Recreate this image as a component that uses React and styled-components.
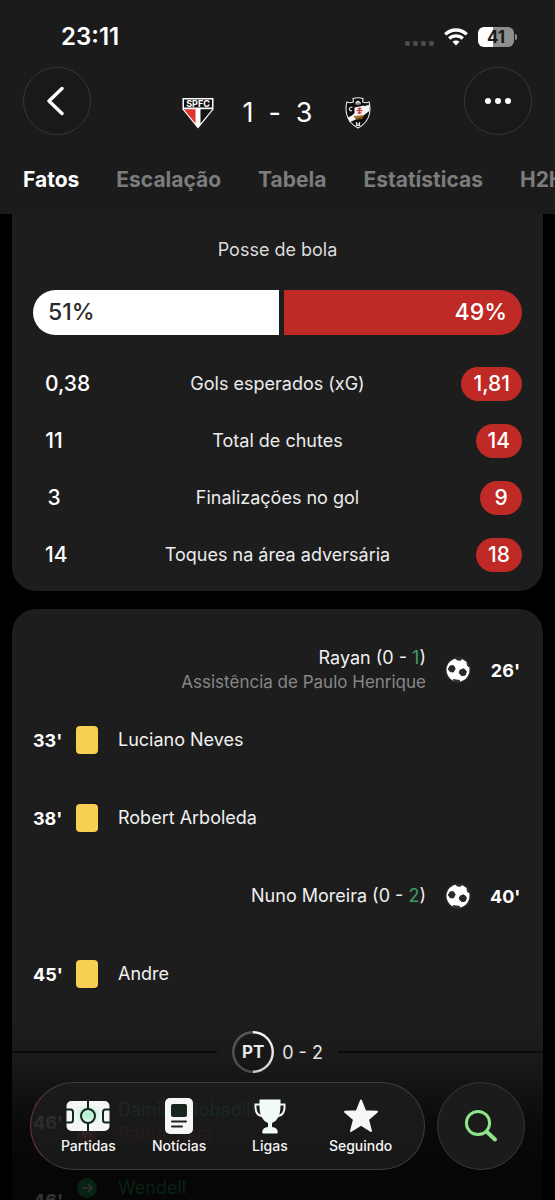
import React from 'react'
import styled, { createGlobalStyle } from 'styled-components'

const GlobalStyle = createGlobalStyle`
  * {
    box-sizing: border-box;
  }
  body {
    margin: 0;
    background: #000;
    color: #fff;
    font-family: Inter, "Liberation Sans", sans-serif;
  }
  button, a {
    font: inherit;
    color: inherit;
  }
`

const Screen = styled.div`
  position: relative;
  display: flex;
  flex-direction: column;
  height: 100vh;
  overflow: hidden;
`

const Header = styled.header`
  flex: none;
  background: #1b1b1b;
`

const StatusBar = styled.div`
  display: flex;
  align-items: center;
  justify-content: space-between;
  padding: 24px 38px 17px 61px;
  font-size: 24px;
  line-height: 26px;
  font-weight: 600;
`

const StatusIcons = styled.div`
  display: flex;
  align-items: center;
  gap: 10px;
`

const SignalDots = styled.div`
  display: flex;
  gap: 3px;
  padding-top: 12px;
  & > i {
    width: 5px;
    height: 5px;
    border-radius: 2px;
    background: #4c4c4c;
  }
`

const Battery = styled.div`
  display: flex;
  align-items: center;
  gap: 1px;
  & > span {
    width: 36px;
    border-radius: 6px;
    background: linear-gradient(90deg, #fff 41%, #8f8f8f 41%);
    color: #1b1b1b;
    font-size: 17px;
    line-height: 20px;
    font-weight: 700;
    text-align: center;
  }
  &::after {
    content: "";
    width: 2px;
    height: 6px;
    border-radius: 0 2px 2px 0;
    background: #8f8f8f;
  }
`

const NavBar = styled.div`
  display: flex;
  align-items: center;
  justify-content: space-between;
  padding: 0 23px;
`

const RoundButton = styled.button`
  display: grid;
  place-items: center;
  width: 68px;
  height: 68px;
  padding: 0;
  border: 1px solid #373737;
  border-radius: 50%;
  background: #191919;
`

const Score = styled.div`
  display: flex;
  align-items: center;
  gap: 29px;
  padding-top: 24px;
`

const ScoreText = styled.div`
  display: flex;
  justify-content: space-between;
  width: 70px;
  font-size: 27px;
  line-height: 32px;
`

const Tabs = styled.nav`
  display: flex;
  gap: 37px;
  padding: 30px 0 19px 23px;
  overflow: hidden;
`

const Tab = styled.a`
  flex: none;
  color: ${p => (p.$active ? '#fff' : '#7c7c7c')};
  font-size: 21px;
  line-height: 30px;
  font-weight: 700;
  text-decoration: none;
`

const Feed = styled.main`
  flex: 1;
  min-height: 0;
  overflow: hidden;
  padding: 0 12px;
`

const Card = styled.section`
  background: #1d1d1d;
  border-radius: ${p => (p.$open ? '0 0 24px 24px' : '24px')};
  & + & {
    margin-top: 18px;
  }
`

const Stats = styled(Card)`
  padding: 21px 21px 8px;
`

const StatsTitle = styled.h2`
  margin: 0 0 25px;
  color: #dcdcdc;
  font-size: 18px;
  line-height: 30px;
  font-weight: 400;
  text-align: center;
`

const Possession = styled.div`
  display: flex;
  gap: 5px;
  margin-bottom: 20px;
  border-radius: 23px;
  overflow: hidden;
  font-size: 23px;
  line-height: 45px;
  font-weight: 500;
`

const Share = styled.div`
  padding: 0 15px;
  background: ${p => (p.$away ? '#c02a26' : '#fff')};
  color: ${p => (p.$away ? '#fff' : '#2b2b2b')};
  text-align: ${p => (p.$away ? 'right' : 'left')};
`

const StatTable = styled.table`
  width: 100%;
  border-collapse: collapse;
  table-layout: fixed;
`

const StatRow = styled.tr`
  height: 57px;
  font-size: 21px;
  font-weight: 500;
  & > td {
    width: 90px;
    padding: 0;
  }
  & > td:last-child {
    text-align: right;
  }
  & > th {
    padding: 0;
    color: #ececec;
    font-size: 18px;
    font-weight: 400;
  }
`

const Value = styled.span`
  display: inline-block;
  min-width: 42px;
  padding: 0 12px;
  border-radius: 17px;
  background: ${p => (p.$best ? '#c02a26' : 'transparent')};
  line-height: 34px;
  text-align: center;
`

const Timeline = styled(Card)`
  padding-top: 30px;
`

const Event = styled.div`
  display: grid;
  grid-template-columns: ${p => (p.$away ? '1fr 26px 30px' : '43px 22px 1fr')};
  column-gap: ${p => (p.$away ? '19px' : '0')};
  align-items: center;
  height: ${p => (p.$tall ? '62px' : '78px')};
  margin-bottom: ${p => (p.$spaced ? '16px' : '0')};
  padding: 0 23px 0 21px;
  text-align: ${p => (p.$away ? 'right' : 'left')};
`

const Minute = styled.time`
  font-size: 18px;
  font-weight: 700;
  white-space: nowrap;
`

const Names = styled.div`
  padding-left: ${p => (p.$indent ? '20px' : '0')};
  color: #f0f0f0;
  font-size: 18px;
  line-height: 24px;
`

const Assist = styled.div`
  color: #878787;
  font-size: 17px;
`

const Colored = styled.span`
  color: ${p => p.$color};
`

const YellowCard = styled.span`
  width: 22px;
  height: 28px;
  border-radius: 4px;
  background: #f7cf52;
`

const SubIcons = styled.span`
  display: grid;
  justify-items: center;
  gap: 4px;
`

const Period = styled.div`
  display: flex;
  align-items: center;
  height: 78px;
  font-size: 18px;
  &::before, &::after {
    content: "";
    flex: 1;
    height: 2px;
    background: #0c0c0c;
  }
  &::before {
    margin-right: 15px;
  }
  &::after {
    margin-left: 15px;
  }
`

const PeriodBadge = styled.span`
  display: grid;
  place-items: center;
  width: 42px;
  height: 42px;
  margin-right: 8px;
  border-radius: 50%;
  background:
    radial-gradient(circle, #1a1a1a 18px, transparent 19px),
    conic-gradient(#fff 50%, #5c5c5c 50%);
  font-size: 17px;
  font-weight: 700;
`

const Bottom = styled.div`
  position: absolute;
  left: 0;
  right: 0;
  bottom: 0;
  display: flex;
  gap: 12px;
  padding: 62px 30px 30px;
  background: linear-gradient(
    rgba(0, 0, 0, 0) 0,
    rgba(0, 0, 0, 0.12) 40px,
    rgba(0, 0, 0, 0.62) 100px,
    rgba(0, 0, 0, 0.8) 150px
  );
`

const Dock = styled.nav`
  flex: 1;
  display: grid;
  grid-template-columns: repeat(4, 1fr);
  height: 88px;
  padding: 15px 18px 0 12px;
  border: 1px solid #3c3c3c;
  border-left-color: #6b3836;
  border-radius: 44px;
  background: rgba(30, 30, 30, 0.78);
`

const DockItem = styled.a`
  display: grid;
  grid-template-rows: 36px 24px;
  justify-items: center;
  align-items: center;
  color: #f6f6f6;
  font-size: 14px;
  line-height: 24px;
  font-weight: 500;
  text-decoration: none;
`

const SearchButton = styled(RoundButton)`
  width: 88px;
  height: 88px;
  background: #1b1b1b;
`

function Wifi() {
  return (
    <svg width="24" height="18" viewBox="0 0 24 18" fill="none" stroke="#fff" strokeWidth="3.4">
      <path d="M1.3 6.4C7.2 0.6 16.8 0.6 22.7 6.4" />
      <path d="M5.2 10.6C9 7 15 7 18.8 10.6" />
      <path d="M12 17.6L8.4 13.8C10.4 11.9 13.6 11.9 15.6 13.8Z" fill="#fff" stroke="none" />
    </svg>
  )
}

function HomeCrest() {
  return (
    <svg width="32" height="32" viewBox="0 0 32 32" role="img" aria-label="SPFC">
      <path d="M0.5 1H31.5V12.5L16 31.5L0.5 12.5Z" fill="#fff" />
      <path d="M2 2.5H30V10.500H2Z" fill="#111" />
      <path d="M2 12.200H13.500V26.500L2 12.5Z" fill="#e0342f" />
      <path d="M30 12.200H18.500V26.500L30 12.5Z" fill="#111" />
      <text x="16" y="9.600" fill="#fff" fontSize="9" fontWeight="700" textAnchor="middle" fontFamily="Inter, sans-serif">SPFC</text>
    </svg>
  )
}

function AwayCrest() {
  return (
    <svg width="32" height="32" viewBox="0 0 32 32" role="img" aria-label="Vasco">
      <path d="M11 1.6Q16 0 21 1.6L20.6 5Q24 6.4 27.2 5Q28.600 11 27.400 17Q25.500 26 16 31Q6.500 26 4.600 17Q3.400 11 4.800 5Q8 6.400 11.400 5Z" fill="#0c0c0c" stroke="#ececec" strokeWidth="1.1" />
      <path d="M27.600 7.500L27.300 14Q20 20 15 22L7.500 25.200L5.800 20.500Q9 19.500 13 16L21 9.500Z" fill="#f4f4f4" />
      <path d="M12.500 10.500L22 8.500L22.500 17L12.500 18Z" fill="#fbfbfb" />
      <path d="M17.500 10.500V17M14.500 13.700H20.500M15.600 11.500H19.400M15.600 16H19.400" stroke="#d23a38" strokeWidth="1.300" />
      <path d="M11.500 19L22 18L20.500 22L14 22.800Z" fill="#a9712a" />
      <path d="M14 22.500L21 20.500" stroke="#402a10" />
      <path d="M14 7.500Q14 4 16.500 4.500Q18.500 5 18 7.500M16 5V8M10.500 10Q7 10 7.500 12.500Q8 14.500 10 13.500M14.500 25V28.500H17.500V25M14.500 27H17.500" fill="none" stroke="#e4e4e4" strokeWidth="1.200" />
    </svg>
  )
}

function Ball() {
  return (
    <svg width="26" height="26" viewBox="0 0 26 26">
      <circle cx="13" cy="13" r="13" fill="#2a2a2a" />
      <circle cx="13" cy="13" r="11.500" fill="#fff" />
      <g fill="#2a2a2a" stroke="#2a2a2a" strokeLinejoin="round">
        <path d="M5 9L8.400 8.600L10.200 11.600L8.400 15L5 14.600L3.400 12Z" />
        <path d="M15.200 13L19 11.800L21.400 14.400L20.400 18L16.800 18.800L14.200 16Z" />
        <path d="M10.500 1.400L17 1.800L15.300 3.200L12.400 3Z" />
        <path d="M22 6L24.200 9.500L22.800 9Z" />
        <path d="M8 22.600L11 23L14.500 23.400L14.400 24.600L10.400 24.600Z" />
      </g>
    </svg>
  )
}

function SubArrow({ color, back }) {
  return (
    <svg width="20" height="20" viewBox="0 0 20 20">
      <circle cx="10" cy="10" r="10" fill={color} />
      <path
        d={back ? 'M15 10H5M9 6L5 10L9 14' : 'M5 10H15M11 6L15 10L11 14'}
        fill="none"
        stroke="#fff"
        strokeWidth="1.5"
      />
    </svg>
  )
}

function PitchIcon() {
  return (
    <svg width="44" height="32" viewBox="0 0 44 32">
      <defs>
        <radialGradient id="glow" cx="50%" cy="45%" r="36%">
          <stop offset="0" stopColor="#a9f0cc" />
          <stop offset="1" stopColor="#f6f6f6" />
        </radialGradient>
      </defs>
      <rect x="0.5" y="1" width="43" height="30" rx="5" fill="url(#glow)" />
      <g fill="none" stroke="#14261c" strokeWidth="2">
        <circle cx="22" cy="16" r="7" />
        <path d="M22 1V9M22 23V31" />
        <path d="M0 9.500H4.500Q7 9.500 7 12V20Q7 22.500 4.500 22.500H0" />
        <path d="M44 9.500H39.500Q37 9.500 37 12V20Q37 22.500 39.500 22.500H44" />
      </g>
    </svg>
  )
}

function NewsIcon() {
  return (
    <svg width="28" height="36" viewBox="0 0 28 36">
      <rect width="28" height="36" rx="5" fill="#f6f6f6" />
      <rect x="6" y="6" width="16" height="13" rx="2" fill="#17271e" />
      <path d="M7 23.500H21M7 28.500H17" stroke="#222" strokeWidth="2" strokeLinecap="round" />
    </svg>
  )
}

function CupIcon() {
  return (
    <svg width="32" height="35" viewBox="0 0 32 35">
      <path d="M6 5.500H1.500Q0.800 17 9 17M26 5.500H30.500Q31.200 17 23 17" fill="none" stroke="#f6f6f6" strokeWidth="2" />
      <path d="M5.500 0.500H26.500Q27 13 24.500 18Q22.500 22 18 24V28Q23.500 28.500 23.800 33Q24 34.500 22.500 34.500H9.500Q8 34.500 8.200 33Q8.500 28.500 14 28V24Q9.500 22 7.500 18Q5 13 5.500 0.500Z" fill="#f1faf5" />
    </svg>
  )
}

function StarIcon() {
  return (
    <svg width="36" height="34" viewBox="0 0 36 34">
      <path
        d="M18 1.500L22.200 12.200L34 12.800L25 20.500L28 32L18 25.600L8 32L11 20.500L2 12.800L13.800 12.200Z"
        fill="#f6f6f6"
        stroke="#f6f6f6"
        strokeWidth="2"
        strokeLinejoin="round"
      />
    </svg>
  )
}

const tabs = ['Fatos', 'Escalação', 'Tabela', 'Estatísticas', 'H2H']

const stats = [
  { label: 'Gols esperados (xG)', home: '0,38', away: '1,81' },
  { label: 'Total de chutes', home: '11', away: '14' },
  { label: 'Finalizações no gol', home: '3', away: '9' },
  { label: 'Toques na área adversária', home: '14', away: '18' },
]

const dock = [
  { label: 'Partidas', Icon: PitchIcon },
  { label: 'Notícias', Icon: NewsIcon },
  { label: 'Ligas', Icon: CupIcon },
  { label: 'Seguindo', Icon: StarIcon },
]

function Goal({ minute, player, home, away, assist }) {
  return (
    <Event $away $tall={Boolean(assist)}>
      <Names>
        {player} ({home} - <Colored $color="#3c9d63">{away}</Colored>)
        {assist && <Assist>Assistência de {assist}</Assist>}
      </Names>
      <Ball />
      <Minute>{minute}'</Minute>
    </Event>
  )
}

function Booking({ minute, player }) {
  return (
    <Event>
      <Minute>{minute}'</Minute>
      <YellowCard />
      <Names $indent>{player}</Names>
    </Event>
  )
}

function Substitution({ minute, on, off }) {
  return (
    <Event $tall $spaced>
      <Minute>{minute}'</Minute>
      <SubIcons>
        <SubArrow color="#23a561" />
        <SubArrow color="#d83a36" back />
      </SubIcons>
      <Names $indent>
        <Colored as="div" $color="#23a561">{on}</Colored>
        <Colored as="div" $color="#d83a36">{off}</Colored>
      </Names>
    </Event>
  )
}

function App() {
  return (
    <Screen>
      <GlobalStyle />
      <Header>
        <StatusBar>
          <span>23:11</span>
          <StatusIcons>
            <SignalDots><i /><i /><i /><i /></SignalDots>
            <Wifi />
            <Battery><span>41</span></Battery>
          </StatusIcons>
        </StatusBar>
        <NavBar>
          <RoundButton aria-label="Voltar">
            <svg width="20" height="30" viewBox="0 0 20 30" fill="none" stroke="#fff" strokeWidth="3.4" strokeLinecap="round" strokeLinejoin="round">
              <path d="M15 2.500L2 15L15 27.500" />
            </svg>
          </RoundButton>
          <Score>
            <HomeCrest />
            <ScoreText><span>1</span><span>-</span><span>3</span></ScoreText>
            <AwayCrest />
          </Score>
          <RoundButton aria-label="Mais opções">
            <svg width="28" height="8" viewBox="0 0 28 8" fill="#fff">
              <circle cx="4" cy="4" r="3" />
              <circle cx="14" cy="4" r="3" />
              <circle cx="24" cy="4" r="3" />
            </svg>
          </RoundButton>
        </NavBar>
        <Tabs>
          {tabs.map((name, i) => (
            <Tab key={name} href="#" $active={i === 0}>{name}</Tab>
          ))}
        </Tabs>
      </Header>

      <Feed>
        <Stats $open>
          <StatsTitle>Posse de bola</StatsTitle>
          <Possession>
            <Share style={{ flex: 51 }}>51%</Share>
            <Share $away style={{ flex: 49 }}>49%</Share>
          </Possession>
          <StatTable>
            <tbody>
              {stats.map(s => (
                <StatRow key={s.label}>
                  <td><Value>{s.home}</Value></td>
                  <th scope="row">{s.label}</th>
                  <td><Value $best>{s.away}</Value></td>
                </StatRow>
              ))}
            </tbody>
          </StatTable>
        </Stats>

        <Timeline>
          <Goal minute={26} player="Rayan" home={0} away={1} assist="Paulo Henrique" />
          <Booking minute={33} player="Luciano Neves" />
          <Booking minute={38} player="Robert Arboleda" />
          <Goal minute={40} player="Nuno Moreira" home={0} away={2} />
          <Booking minute={45} player="Andre" />
          <Period>
            <PeriodBadge>PT</PeriodBadge>
            <span>0 - 2</span>
          </Period>
          <Substitution minute={46} on="Damián Bobadilla" off="Pablo Maia" />
          <Substitution minute={46} on="Wendell" off="Enzo Díaz" />
        </Timeline>
      </Feed>

      <Bottom>
        <Dock>
          {dock.map(({ label, Icon }) => (
            <DockItem key={label} href="#">
              <Icon />
              <span>{label}</span>
            </DockItem>
          ))}
        </Dock>
        <SearchButton aria-label="Buscar">
          <svg width="36" height="36" viewBox="0 0 36 36" fill="none" stroke="#8ee58a" strokeLinecap="round">
            <circle cx="15" cy="15" r="11.600" strokeWidth="3" />
            <path d="M24.500 24.500L32 31.500" strokeWidth="4" />
          </svg>
        </SearchButton>
      </Bottom>
    </Screen>
  )
}

export default App
